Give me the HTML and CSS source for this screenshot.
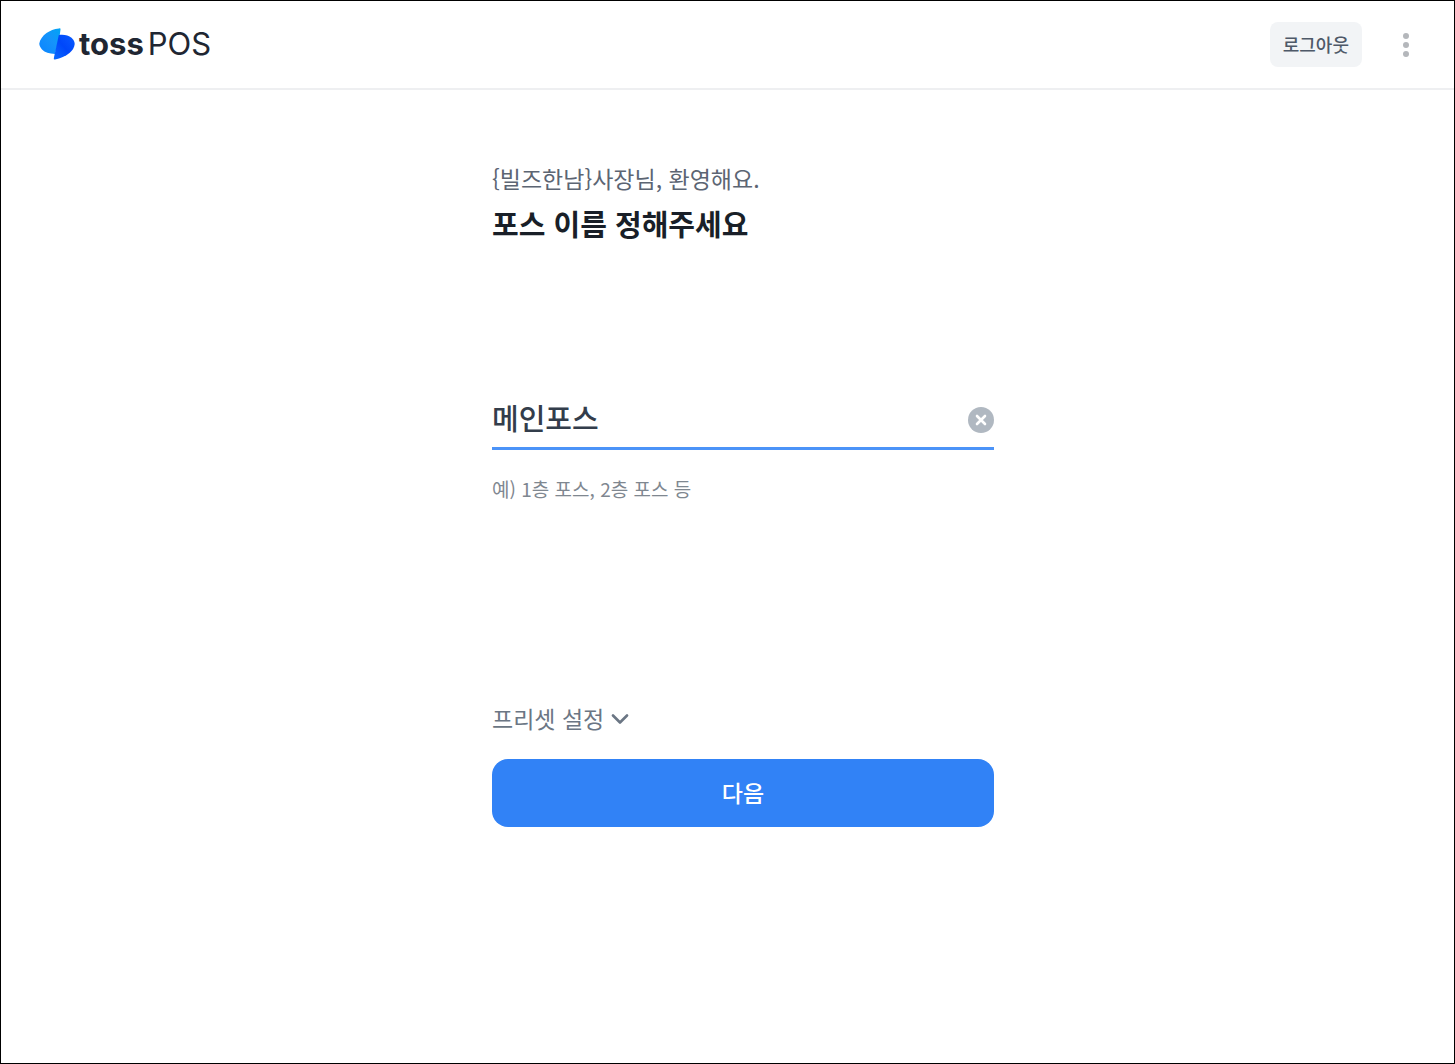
FILE: index.html
```html
<!DOCTYPE html>
<html lang="ko">
<head>
<meta charset="utf-8">
<meta name="viewport" content="width=device-width, initial-scale=1">
<title>toss POS</title>
<link rel="stylesheet" href="styles.css">
</head>
<body>
<header class="topbar">
  <a class="brand" href="#" aria-label="toss POS">
    <svg class="brand-mark" viewBox="0 0 36 32" aria-hidden="true">
      <defs>
        <linearGradient id="light" x1="0" y1="1" x2="1" y2="0">
          <stop offset="0" stop-color="#0a84ff"/>
          <stop offset=".55" stop-color="#1593fb"/>
          <stop offset="1" stop-color="#00a5f5"/>
        </linearGradient>
        <linearGradient id="deep" x1="1" y1="0" x2="0" y2="1">
          <stop offset="0" stop-color="#0a5cff"/>
          <stop offset=".5" stop-color="#0047fa"/>
          <stop offset="1" stop-color="#0a6cff"/>
        </linearGradient>
      </defs>
      <path fill="url(#light)" d="M20 .4Q21.800 0 21.500 1.500L20.500 9L16 26C10 25.500 6 24.500 3 21.500C1.500 19.500 .2 17.500 .3 15.500C1 11.500 3.500 8 7.500 5C11 2.500 15 1 20 .4Z"/>
      <path fill="url(#deep)" d="M19.800 6.900C25 6.200 29.500 7.200 32.500 9.800C34.500 11.800 35.800 14 35.700 16C35.300 19.500 33.500 22.500 30.500 25C26.500 28.300 21.500 30.300 16 31.500Q14.500 31.800 14.800 30.300Z"/>
    </svg>
    <span class="brand-name">toss</span>
    <span class="brand-product">POS</span>
  </a>
  <div class="actions">
    <button class="logout" type="button">로그아웃</button>
    <button class="more" type="button" aria-label="더보기">
      <svg class="more-icon" viewBox="0 0 8 24" aria-hidden="true">
        <circle cx="4" cy="3" r="3"/><circle cx="4" cy="12" r="3"/><circle cx="4" cy="21" r="3"/>
      </svg>
    </button>
  </div>
</header>
<main class="page">
  <form class="setup">
    <p class="welcome">{빌즈한남}사장님, 환영해요.</p>
    <h1 class="title"><label for="pos-name">포스 이름 정해주세요</label></h1>
    <div class="field">
      <input class="field-input" id="pos-name" type="text" value="메인포스" aria-describedby="pos-hint">
      <button class="clear" type="button" aria-label="지우기">
        <svg class="clear-icon" viewBox="0 0 26 26" aria-hidden="true">
          <circle cx="13" cy="13" r="13" fill="#b0b8c1"/>
          <path d="M9 9l8 8M17 9l-8 8" stroke="#fff" stroke-width="2.600" stroke-linecap="round"/>
        </svg>
      </button>
    </div>
    <p class="hint" id="pos-hint">예) 1층 포스, 2층 포스 등</p>
    <button class="preset" type="button">프리셋 설정
      <svg class="chevron" viewBox="0 0 18 12" aria-hidden="true">
        <path d="M2 3.500l7 7 7-7" fill="none" stroke="#6b7684" stroke-width="2.600" stroke-linecap="round" stroke-linejoin="round"/>
      </svg>
    </button>
    <button class="next" type="submit">다음</button>
  </form>
</main>
</body>
</html>
```
FILE: styles.css
```css
* {
  box-sizing: border-box;
}

body {
  margin: 0;
  min-height: 100vh;
  border: 1px solid #000;
  background: #fff;
  font-family: "Noto Sans CJK KR", sans-serif;
}

button {
  padding: 0;
  border: 0;
  background: none;
  font-family: inherit;
  cursor: pointer;
}

svg {
  display: block;
}

.topbar {
  display: flex;
  align-items: center;
  justify-content: space-between;
  height: 89px;
  padding: 0 40px 0 38px;
  border-bottom: 2px solid #eeeff1;
}

.brand {
  display: flex;
  align-items: center;
  gap: 4px;
  padding-bottom: 2px;
  color: #202632;
  font-family: Inter, sans-serif;
  font-size: 31px;
  line-height: 36px;
  text-decoration: none;
}

.brand-mark {
  width: 36px;
  height: 32px;
}

.brand-name {
  font-weight: 700;
}

.brand-product {
  font-weight: 400;
}

.actions {
  display: flex;
  align-items: center;
  gap: 36px;
}

.logout {
  padding: 0 13px;
  border-radius: 8px;
  background: #f2f4f6;
  color: #4e5968;
  font-size: 18px;
  font-weight: 500;
  line-height: 45px;
}

.more {
  padding: 0 4px;
}

.more-icon {
  width: 8px;
  height: 24px;
  fill: #b4b7bb;
}

.page {
  padding: 70px 0 70px 31px;
}

.setup {
  display: flex;
  flex-direction: column;
  max-width: 502px;
  margin: 0 auto;
}

.welcome {
  margin: 0;
  color: #5c6573;
  font-size: 23px;
  line-height: 36px;
}

.title {
  margin: 5px 0 142px;
  color: #191f28;
  font-size: 29px;
  font-weight: 700;
  line-height: 44px;
}

.field {
  display: flex;
  align-items: flex-end;
  border-bottom: 3px solid #4b93f8;
}

.field-input {
  flex: 1;
  min-width: 0;
  height: 60px;
  padding: 0;
  border: 0;
  outline: 0;
  background: none;
  color: #333d4b;
  font-family: inherit;
  font-size: 29px;
  font-weight: 500;
}

.clear {
  padding-bottom: 14px;
}

.clear-icon {
  width: 26px;
  height: 26px;
}

.hint {
  margin: 23px 0 195px;
  color: #7f8790;
  font-size: 19px;
  line-height: 32px;
}

.preset {
  display: flex;
  align-items: center;
  align-self: flex-start;
  gap: 7px;
  margin-bottom: 23px;
  color: #6b7684;
  font-size: 23px;
  line-height: 36px;
}

.chevron {
  width: 18px;
  height: 12px;
}

.next {
  padding-bottom: 2px;
  border-radius: 16px;
  background: #3182f6;
  color: #fff;
  font-size: 23px;
  font-weight: 500;
  line-height: 66px;
}
```
